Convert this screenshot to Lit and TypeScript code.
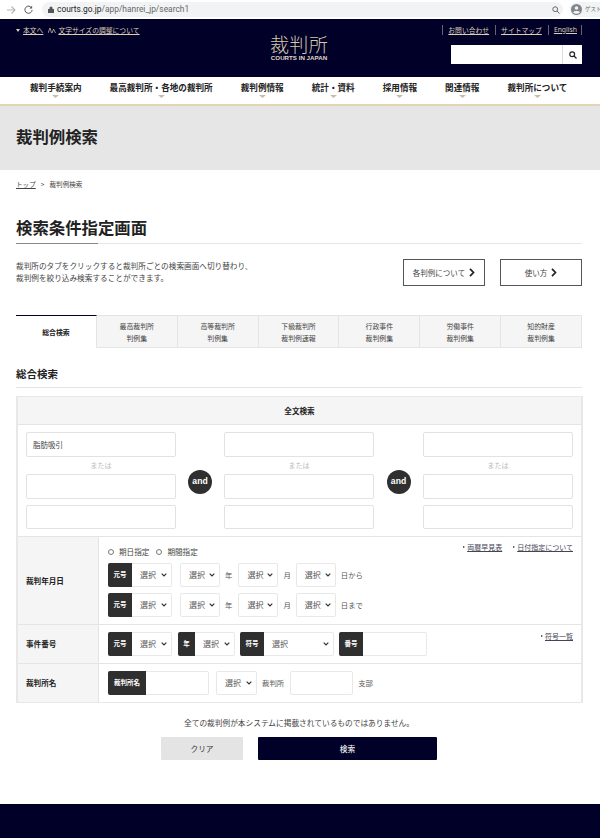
import { LitElement, html, css } from "lit";
import { customElement } from "lit/decorators.js";

const chevron = html`<svg class="nav-chev" width="7" height="3" viewBox="0 0 7 3"><path d="M0 0h7L3.5 3z"></path></svg>`;
const opts = html`<option>選択</option>`;
const arrow = html`<svg width="6" height="9" viewBox="0 0 6 9" fill="none" stroke="#222" stroke-width="1.7"><path d="M1 .8 4.500 4.500 1 8.200"></path></svg>`;

@customElement("app-root")
export class AppRoot extends LitElement {
  static styles = css`
    :host { display: block; width: 600px; height: 838px; overflow: hidden; background: #fff; color: #333;
      font-family: "Noto Sans CJK JP", "Noto Sans", sans-serif; font-size: 7.5px; line-height: 1.2; }
    a { color: inherit; }
    .chrome { height: 19px; display: flex; align-items: center; background: #fff; box-sizing: border-box; padding-left: 6px; }
    .chrome .ic { display: block; flex: none; }
    .reload { margin-left: 8px; }
    .pill { margin-left: 9px; width: 521px; height: 15px; border-radius: 8px; background: #f1f3f4; display: flex; align-items: center; padding-left: 6px; box-sizing: border-box; }
    .url { margin-left: 3px; font-family: Roboto, sans-serif; font-size: 8.4px; color: #666; flex: 1; }
    .url b { font-weight: 400; color: #222; }
    .acct { margin-left: 7px; height: 15px; flex: 1; border-radius: 8px 0 0 8px; background: #f1f3f4; display: flex; align-items: center; padding-left: 1px; gap: 3px; font-size: 5.5px; color: #666; white-space: nowrap; overflow: hidden; }
    header { height: 58px; background: #000028; display: grid; grid-template-columns: 1fr 140px 1fr; box-sizing: border-box; padding: 5px 18px 0 16px; color: #dccfb5; }
    .skip { display: flex; align-items: center; gap: 5px; font-size: 6.8px; height: 12px; white-space: nowrap; }
    .skip span { display: flex; align-items: center; gap: 2px; }
    .tri { width: 0; height: 0; border-left: 2px solid transparent; border-right: 2px solid transparent; border-top: 3px solid #dccfb5; margin-right: 1px; }
    .logo { text-align: center; color: #d8c9a9; }
    .logo .ja { font-size: 19px; font-weight: 300; line-height: 20px; margin-top: 10px; letter-spacing: .3px; }
    .logo .en { font-family: "Liberation Sans", sans-serif; font-size: 6.2px; font-weight: 700; color: #e0d8c8; line-height: 7px; margin-top: 0; white-space: nowrap; }
    .h-right { display: flex; flex-direction: column; align-items: flex-end; }
    .h-links { display: flex; height: 12px; align-items: center; font-size: 6.8px; white-space: nowrap; }
    .h-links a { border-left: 1px solid #666; padding: 1px 6px 1px 5px; }
    .h-links a:last-child { border-right: 1px solid #666; padding: 1px 4px 1px 5px; font-family: "Noto Sans", sans-serif; }
    .h-search { margin-top: 9px; width: 131px; height: 19px; background: #fff; display: flex; justify-content: flex-end; }
    .h-search div { width: 19px; border-left: 1px solid #ddd; display: flex; align-items: center; justify-content: center; }
    nav { height: 27px; display: flex; gap: 28px; padding-left: 30px; border-bottom: 2px solid #e3d5b4; box-sizing: content-box; }
    nav div { display: flex; flex-direction: column; align-items: center; font-size: 8.6px; font-weight: 700; color: #222; white-space: nowrap; padding-top: 4px; line-height: 13px; }
    .nav-chev { fill: #c8bda5; margin-top: 1px; }
    .band { height: 64px; background: #e6e6e6; display: flex; align-items: center; padding-left: 16px; font-size: 16.4px; font-weight: 700; color: #222; padding-bottom: 3px; box-sizing: border-box; }
    main { padding: 0 18px 0 16px; }
    .crumb { margin-top: 10px; height: 10px; display: flex; gap: 5px; align-items: center; font-size: 6.6px; color: #444; }
    h1 { margin: 25px 0 0; font-size: 16.4px; line-height: 24px; font-weight: 700; color: #222; height: 24px; }
    .rule { margin-top: 4px; height: 1px; background: #e6e6e6; }
    .rule-dark { width: 82px; height: 1px; background: #888; }
    .intro { margin-top: 10px; display: flex; justify-content: space-between; align-items: flex-start; }
    .intro p { margin: 6px 0 0; font-size: 7.65px; line-height: 12px; color: #444; }
    .btns { display: flex; gap: 15px; padding-top: 5px; }
    .btn { width: 82px; height: 27px; box-sizing: border-box; border: 1px solid #555; display: flex; align-items: center; justify-content: center; gap: 4px; font-size: 7.5px; color: #444; background: #fff; }
    .tabs { margin-top: 29px; display: grid; grid-template-columns: repeat(7, 1fr); height: 33px; }
    .tab { background: #f5f5f5; border: 1px solid #e4e4e4; border-left: 0; display: flex; align-items: center; justify-content: center; text-align: center; font-size: 6.9px; line-height: 12px; color: #444; }
    .tab.on { background: #fff; border: 0; border-top: 1px solid #000028; border-right: 1px solid #e4e4e4; font-weight: 700; color: #222; }
    h2 { margin: 19px 0 0; font-size: 10.5px; line-height: 14px; font-weight: 700; color: #222; }
    .rule2 { margin-top: 6px; height: 1px; background: #e4e4e4; }
    .table { margin: 8px -1px 0 0; border: 1px solid #e8e8e8; border-right-width: 2px; border-left-width: 2px; }
    .thead { height: 27px; background: #f5f5f5; border-bottom: 1px solid #e4e4e4; display: flex; align-items: center; justify-content: center; font-size: 7.6px; font-weight: 700; color: #222; }
    .full { display: grid; grid-template-columns: 150px 48px 150px 49px 150px; padding: 7px 8px 7px 8px; border-bottom: 1px solid #e4e4e4; }
    .col { display: flex; flex-direction: column; }
    input { box-sizing: border-box; border: 1px solid #e2e2e2; border-radius: 2px; height: 25px; background: #fff; padding: 0 6px; font: inherit; font-size: 7.5px; color: #444; outline: none; width: 100%; }
    .or { height: 17px; display: flex; align-items: center; justify-content: center; color: #bbb; font-size: 7px; }
    .gap6 { margin-top: 6px; height: 24px; }
    .and { display: flex; align-items: center; justify-content: center; padding-top: 2px; }
    .and span { width: 24px; height: 24px; border-radius: 50%; background: #2f2f2f; color: #fff; display: flex; align-items: center; justify-content: center; font-family: "Liberation Sans", sans-serif; font-weight: 700; font-size: 8.6px; }
    .row { display: grid; grid-template-columns: 81px 1fr; border-bottom: 1px solid #e4e4e4; }
    .row:last-child { border-bottom: 0; }
    .lab { background: #f5f5f5; border-right: 1px solid #e4e4e4; display: flex; align-items: center; padding-left: 8px; font-weight: 700; font-size: 7.6px; color: #222; }
    .val { padding: 7px 9px; position: relative; }
    .val.dates { padding: 8px 8px 7px 9px; }
    .top { display: flex; justify-content: space-between; height: 18px; align-items: flex-start; }
    .radios { display: flex; gap: 7px; padding-top: 2px; font-size: 7.6px; color: #444; }
    .radios span { display: flex; align-items: center; gap: 5px; }
    .radios i { width: 4px; height: 4px; border: 1px solid #777; border-radius: 50%; }
    .links { display: flex; gap: 11px; font-size: 7px; color: #445; margin-top: -2px; }
    .links span { display: flex; align-items: center; gap: 2px; }
    .mini { width: 0; height: 0; border-top: 1.5px solid transparent; border-bottom: 1.5px solid transparent; border-left: 2px solid #333; }
    .line { display: flex; align-items: center; height: 24px; font-size: 7.4px; color: #555; }
    .line + .line { margin-top: 6px; }
    .group { display: flex; height: 24px; border: 1px solid #e8e8e8; border-left: 0; box-sizing: border-box; border-radius: 2px; background: #fff; flex: none; }
    .tag { margin: -1px 0; background: #2f2f2f; color: #fff; font-size: 6.5px; font-weight: 700; display: flex; align-items: center; justify-content: center; width: 24px; flex: none; border-radius: 2px 0 0 2px; white-space: nowrap; }
    select { appearance: none; -webkit-appearance: none; box-sizing: border-box; height: 24px; border: 1px solid #e8e8e8; border-radius: 2px; background: #fff url("data:image/svg+xml,%3Csvg xmlns='http://www.w3.org/2000/svg' width='6' height='4' viewBox='0 0 6 4'%3E%3Cpath d='M.7.7 3 3l2.300-2.300' fill='none' stroke='%23333' stroke-width='1.2'/%3E%3C/svg%3E") no-repeat right 4px center; font: inherit; font-size: 8px; color: #555; padding: 0 0 0 8px; outline: none; flex: none; }
    .group select { border: 0; height: 22px; flex: 1; min-width: 0; }
    .s40 { width: 40px; }
    .lt { margin: 0 5px; white-space: nowrap; }
    .lt2 { margin-left: 5px; white-space: nowrap; }
    .right-link { position: absolute; right: 8px; top: 7px; font-size: 7px; color: #445; display: flex; align-items: center; gap: 2px; }
    .notice { margin-top: 14px; text-align: center; font-size: 7.7px; color: #444; line-height: 11px; }
    .actions { margin-top: 9px; display: flex; gap: 15px; padding-left: 145px; }
    .clear, .go { height: 23px; display: flex; align-items: center; justify-content: center; border-radius: 1px; font-size: 7.7px; }
    .clear { width: 82px; background: #e4e4e4; color: #333; }
    .go { width: 179px; background: #000028; color: #eee; font-weight: 500; }
    footer { margin-top: 44px; height: 40px; background: #000028; }
  `;

  render() {
    const date = (end: string) => html`<div class="line">
      <div class="group" style="width:64px"><span class="tag">元号</span><select>${opts}</select></div>
      <select class="s40" style="margin-left:8px">${opts}</select><span class="lt">年</span>
      <select class="s40" style="margin-left:1px">${opts}</select><span class="lt">月</span>
      <select class="s40">${opts}</select><span class="lt2">${end}</span>
    </div>`;
    return html`
      <div class="chrome">
        <svg class="ic" width="10" height="10" viewBox="0 0 10 10" fill="none" stroke="#b5b5b5" stroke-width="1.1"><path d="M1 5h8M5.500 1.500 9 5 5.500 8.500"></path></svg>
        <svg class="ic reload" width="9" height="9" viewBox="0 0 10 10" fill="none" stroke="#555" stroke-width="1.1"><path d="M8.500 3.300A4 4 0 1 0 9 5.500"></path><path d="M9 .8v3H6z" fill="#555" stroke="none"></path></svg>
        <div class="pill">
          <svg class="ic" width="6" height="7" viewBox="0 0 6 7"><path d="M1.500 3V2a1.500 1.500 0 0 1 3 0v1H6v4H0V3z" fill="#555"></path></svg>
          <span class="url"><b>courts.go.jp</b>/app/hanrei_jp/search1</span>
          <svg class="ic" style="margin-right:3px" width="8" height="8" viewBox="0 0 8 8" fill="none" stroke="#666" stroke-width="1"><circle cx="3.200" cy="3.200" r="2.400"></circle><path d="M5 5l2.500 2.500"></path></svg>
        </div>
        <div class="acct">
          <svg class="ic" width="11" height="11" viewBox="0 0 11 11"><circle cx="5.500" cy="5.500" r="5.500" fill="#80868b"></circle><circle cx="5.500" cy="4" r="1.800" fill="#f1f3f4"></circle><path d="M2 8.200c1-1.600 6-1.600 7 0a4.500 4.500 0 0 1-7 0z" fill="#f1f3f4"></path></svg>
          <span>ゲスト</span>
        </div>
      </div>
      <header>
        <div class="skip">
          <span><i class="tri"></i><u>本文へ</u></span>
          <span><svg width="8" height="7" viewBox="0 0 8 7" fill="none" stroke="#dccfb5" stroke-width=".7"><path d="M0 6 2 1l1.600 5M4 6l1.500-4L7.500 6"></path></svg><u>文字サイズの調整について</u></span>
        </div>
        <div class="logo"><div class="ja">裁判所</div><div class="en">COURTS IN JAPAN</div></div>
        <div class="h-right">
          <div class="h-links"><a href="#">お問い合わせ</a><a href="#">サイトマップ</a><a href="#">English</a></div>
          <div class="h-search"><div><svg width="8" height="8" viewBox="0 0 8 8" fill="none" stroke="#222" stroke-width="1.2"><circle cx="3.200" cy="3.200" r="2.400"></circle><path d="M5 5l2.500 2.500"></path></svg></div></div>
        </div>
      </header>
      <nav>
        ${["裁判手続案内", "最高裁判所・各地の裁判所", "裁判例情報", "統計・資料", "採用情報", "関連情報", "裁判所について"].map((t) => html`<div>${t}${chevron}</div>`)}
      </nav>
      <div class="band">裁判例検索</div>
      <main>
        <div class="crumb"><a href="#">トップ</a><span>&gt;</span><span>裁判例検索</span></div>
        <h1>検索条件指定画面</h1>
        <div class="rule"><div class="rule-dark"></div></div>
        <div class="intro">
          <p>裁判所のタブをクリックすると裁判所ごとの検索画面へ切り替わり、<br />裁判例を絞り込み検索することができます。</p>
          <div class="btns">
            <div class="btn">各判例について${arrow}</div>
            <div class="btn">使い方${arrow}</div>
          </div>
        </div>
        <div class="tabs">
          <div class="tab on">総合検索</div>
          <div class="tab">最高裁判所<br />判例集</div>
          <div class="tab">高等裁判所<br />判例集</div>
          <div class="tab">下級裁判所<br />裁判例速報</div>
          <div class="tab">行政事件<br />裁判例集</div>
          <div class="tab">労働事件<br />裁判例集</div>
          <div class="tab">知的財産<br />裁判例集</div>
        </div>
        <h2>総合検索</h2>
        <div class="rule2"></div>
        <div class="table">
          <div class="thead">全文検索</div>
          <div class="full">
            <div class="col"><input value="脂肪吸引" /><div class="or">または</div><input /><input class="gap6" /></div>
            <div class="and"><span>and</span></div>
            <div class="col"><input /><div class="or">または</div><input /><input class="gap6" /></div>
            <div class="and"><span>and</span></div>
            <div class="col"><input /><div class="or">または</div><input /><input class="gap6" /></div>
          </div>
          <div class="row">
            <div class="lab">裁判年月日</div>
            <div class="val dates">
              <div class="top">
                <div class="radios"><span><i></i>期日指定</span><span><i></i>期間指定</span></div>
                <div class="links"><span><i class="mini"></i><u>両暦早見表</u></span><span><i class="mini"></i><u>日付指定について</u></span></div>
              </div>
              ${date("日から")}${date("日まで")}
            </div>
          </div>
          <div class="row">
            <div class="lab">事件番号</div>
            <div class="val">
              <div class="line">
                <div class="group" style="width:64px"><span class="tag">元号</span><select>${opts}</select></div>
                <div class="group" style="width:57px;margin-left:6px"><span class="tag" style="width:17px">年</span><select>${opts}</select></div>
                <div class="group" style="width:94px;margin-left:5px"><span class="tag">符号</span><select>${opts}</select></div>
                <div class="group" style="width:88px;margin-left:5px"><span class="tag">番号</span></div>
              </div>
              <div class="right-link"><i class="mini"></i><u>符号一覧</u></div>
            </div>
          </div>
          <div class="row">
            <div class="lab">裁判所名</div>
            <div class="val">
              <div class="line">
                <div class="group" style="width:101px"><span class="tag" style="width:38px">裁判所名</span></div>
                <select style="width:41px;margin-left:7px">${opts}</select>
                <span class="lt2">裁判所</span>
                <div class="group" style="width:63px;margin-left:6px;border-left:1px solid #e8e8e8"></div>
                <span class="lt2">支部</span>
              </div>
            </div>
          </div>
        </div>
        <div class="notice">全ての裁判例が本システムに掲載されているものではありません。</div>
        <div class="actions"><div class="clear">クリア</div><div class="go">検索</div></div>
      </main>
      <footer></footer>
    `;
  }
}
